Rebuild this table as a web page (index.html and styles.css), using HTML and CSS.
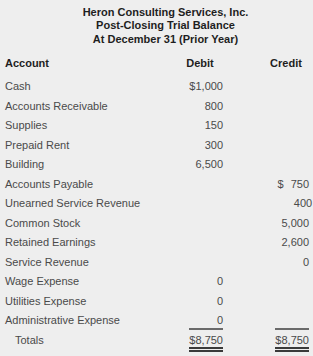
FILE: index.html
```html
<!DOCTYPE html>
<html>
<head>
<meta charset="utf-8">
<link rel="stylesheet" href="styles.css">
</head>
<body>
<div class="title">
  <div>Heron Consulting Services, Inc.</div>
  <div>Post-Closing Trial Balance</div>
  <div>At December 31 (Prior Year)</div>
</div>
<div class="sheet">
  <div class="row head"><div>Account</div><div class="c">Debit</div><div class="c">Credit</div></div>
  <div class="row"><div>Cash</div><div class="n">$1,000</div><div class="n"></div></div>
  <div class="row"><div>Accounts Receivable</div><div class="n">800</div><div class="n"></div></div>
  <div class="row"><div>Supplies</div><div class="n">150</div><div class="n"></div></div>
  <div class="row"><div>Prepaid Rent</div><div class="n">300</div><div class="n"></div></div>
  <div class="row"><div>Building</div><div class="n">6,500</div><div class="n"></div></div>
  <div class="row"><div>Accounts Payable</div><div class="n"></div><div class="n"><span class="cur">$</span>750</div></div>
  <div class="row"><div>Unearned Service Revenue</div><div class="n"></div><div class="n">400</div></div>
  <div class="row"><div>Common Stock</div><div class="n"></div><div class="n">5,000</div></div>
  <div class="row"><div>Retained Earnings</div><div class="n"></div><div class="n">2,600</div></div>
  <div class="row"><div>Service Revenue</div><div class="n"></div><div class="n">0</div></div>
  <div class="row"><div>Wage Expense</div><div class="n">0</div><div class="n"></div></div>
  <div class="row"><div>Utilities Expense</div><div class="n">0</div><div class="n"></div></div>
  <div class="row"><div>Administrative Expense</div><div class="n">0</div><div class="n"></div></div>
  <div class="row totals"><div class="label">Totals</div><div class="amt">$8,750</div><div class="amt">$8,750</div></div>
</div>
</body>
</html>
```
FILE: styles.css
```css
html, body {
  margin: 0;
  padding: 0;
  background: #eeeeee;
}
body {
  font-family: "Liberation Sans", Arial, sans-serif;
  font-size: 11px;
  color: #4a4a4a;
  width: 313px;
  height: 356px;
  overflow: hidden;
}
.title {
  padding: 5.5px 0 0 18px;
  text-align: center;
  font-weight: bold;
  color: #1e1e1e;
  line-height: 13.5px;
}
.sheet {
  padding: 8.2px 4px 0 5px;
}
.row {
  display: grid;
  grid-template-columns: 1fr 46px 46px;
  column-gap: 40px;
  height: 19.5px;
  line-height: 19.5px;
  white-space: nowrap;
}
.row.head {
  font-weight: bold;
  color: #1e1e1e;
  margin-bottom: 3.5px;
}
.c {
  text-align: center;
}
.n {
  text-align: right;
}
.cur {
  margin-right: 7px;
}
.row.totals {
  height: auto;
  margin-top: -2.5px;
  line-height: 13px;
}
.totals .label {
  padding: 6px 0 0 10px;
}
.totals .amt {
  justify-self: end;
  width: 34px;
  text-align: right;
  padding-top: 4px;
  border-top: 2px solid #6a6a6a;
  border-bottom: 5px double #3a3a3a;
}
```
